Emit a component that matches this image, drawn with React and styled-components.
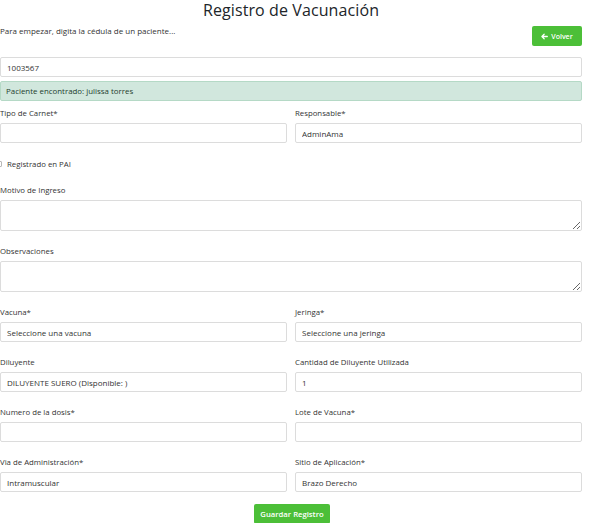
import React from 'react';
import styled, { createGlobalStyle } from 'styled-components';

const GlobalStyle = createGlobalStyle`
  html, body {
    margin: 0;
    padding: 0;
    background: #ffffff;
  }
  body {
    font-family: "Open Sans", "Liberation Sans", sans-serif;
    color: #333;
    overflow: hidden;
  }
`;

const Page = styled.div`
  width: 582px;
  display: flex;
  flex-direction: column;
`;

const Title = styled.h2`
  margin: 0;
  font-size: 16px;
  line-height: 20px;
  font-weight: 500;
  color: #212529;
  text-align: center;
  letter-spacing: 0.1px;
`;

const TopBar = styled.div`
  display: flex;
  justify-content: space-between;
  align-items: flex-start;
  margin-top: 6px;
`;

const Hint = styled.p`
  margin: 0;
  font-size: 8px;
  line-height: 10px;
  color: #333;
`;

const GreenButton = styled.button`
  display: inline-flex;
  align-items: center;
  justify-content: center;
  gap: 3px;
  height: 20px;
  width: ${p => p.$width}px;
  padding: 0;
  border: none;
  border-radius: 2px;
  background: #4cbf38;
  color: #fff;
  font-family: inherit;
  font-size: ${p => p.$size || 7}px;
  font-weight: 600;
  cursor: pointer;
`;

const Field = styled.input`
  box-sizing: border-box;
  width: 100%;
  height: 20px;
  margin: 0;
  padding: 0 6px;
  border: 1px solid #dcdcdc;
  border-radius: 2px;
  background: #fff;
  font-family: inherit;
  font-size: 8px;
  color: #333;
  outline: none;
`;

const SearchField = styled(Field)`
  margin-top: 11px;
`;

const Area = styled.textarea`
  box-sizing: border-box;
  display: block;
  width: 100%;
  height: 31px;
  margin: 0;
  padding: 4px 6px;
  border: 1px solid #dcdcdc;
  border-radius: 2px;
  font-family: inherit;
  font-size: 8px;
  outline: none;
`;

const Alert = styled.div`
  box-sizing: border-box;
  margin-top: 4px;
  height: 20px;
  padding: 0 5px;
  display: flex;
  align-items: center;
  background: #d1e7dd;
  border: 1px solid #b5d9c6;
  border-radius: 2px;
  font-size: 7.9px;
  color: #1e3d2f;
`;

const Form = styled.div`
  display: flex;
  flex-direction: column;
  gap: 15px;
  margin-top: 7px;
`;

const Row = styled.div`
  display: grid;
  grid-template-columns: 1fr 1fr;
  column-gap: 8px;
`;

const Group = styled.div`
  display: flex;
  flex-direction: column;
`;

const Label = styled.label`
  font-size: 7.8px;
  line-height: 10px;
  margin-bottom: 5px;
  color: #333;
`;

const Check = styled.label`
  display: flex;
  align-items: center;
  gap: 5px;
  margin: 1px 0 1px -4px;
  font-size: 7.8px;
  line-height: 10px;
  color: #333;
`;

const Box = styled.span`
  box-sizing: border-box;
  width: 6px;
  height: 6px;
  border: 1px solid #b8b8b8;
  border-radius: 1px;
  background: #fff;
`;

const Footer = styled.div`
  display: flex;
  justify-content: center;
  padding-left: 2px;
  margin-top: -3px;
`;

const ArrowLeft = () => (
  <svg width="7" height="7" viewBox="0 0 10 10" fill="none" stroke="#fff" strokeWidth="1.8" strokeLinecap="round" strokeLinejoin="round">
    <path d="M9 5H1.5M4.5 1.8L1.3 5l3.2 3.2" />
  </svg>
);

const Input = ({ label, value }) => (
  <Group>
    <Label>{label}</Label>
    <Field readOnly value={value || ''} />
  </Group>
);

const TextBox = ({ label }) => (
  <Group>
    <Label>{label}</Label>
    <Area readOnly />
  </Group>
);

const App = () => (
  <Page>
    <GlobalStyle />
    <Title>Registro de Vacunación</Title>
    <TopBar>
      <Hint>Para empezar, digita la cédula de un paciente...</Hint>
      <GreenButton $width={50}>
        <ArrowLeft />
        Volver
      </GreenButton>
    </TopBar>
    <SearchField readOnly value="1003567" />
    <Alert>Paciente encontrado: julissa torres</Alert>
    <Form>
      <Row>
        <Input label="Tipo de Carnet*" />
        <Input label="Responsable*" value="AdminAma" />
      </Row>
      <Check>
        <Box />
        Registrado en PAI
      </Check>
      <TextBox label="Motivo de Ingreso" />
      <TextBox label="Observaciones" />
      <Row>
        <Input label="Vacuna*" value="Seleccione una vacuna" />
        <Input label="Jeringa*" value="Seleccione una jeringa" />
      </Row>
      <Row>
        <Input label="Diluyente" value="DILUYENTE SUERO (Disponible: )" />
        <Input label="Cantidad de Diluyente Utilizada" value="1" />
      </Row>
      <Row>
        <Input label="Numero de la dosis*" />
        <Input label="Lote de Vacuna*" />
      </Row>
      <Row>
        <Input label="Via de Administración*" value="Intramuscular" />
        <Input label="Sitio de Aplicación*" value="Brazo Derecho" />
      </Row>
      <Footer>
        <GreenButton $width={76} $size={7.7}>Guardar Registro</GreenButton>
      </Footer>
    </Form>
  </Page>
);

export default App;
